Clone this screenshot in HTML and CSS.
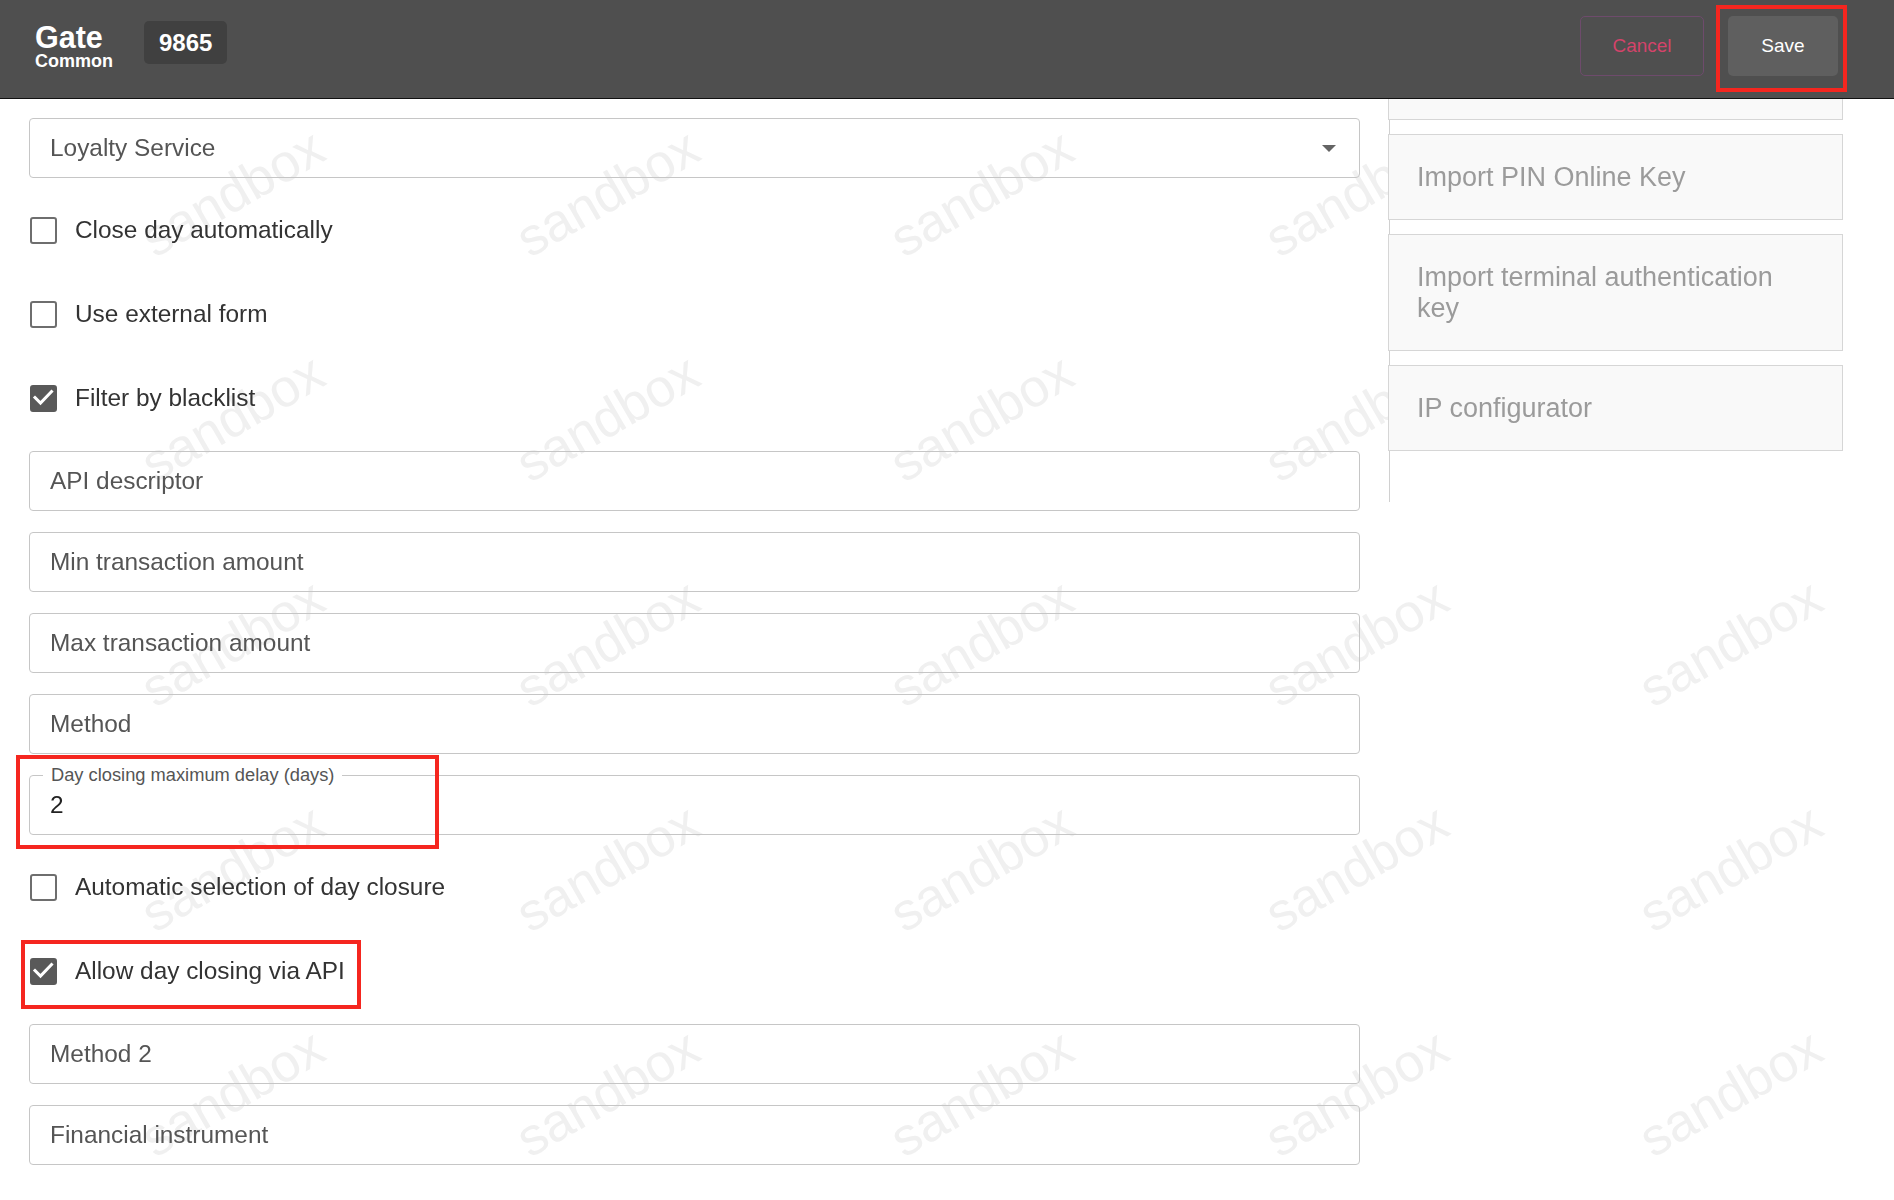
FILE: index.html
```html
<!DOCTYPE html>
<html lang="en">
<head>
<meta charset="utf-8">
<title>Gate Common 9865</title>
<link rel="stylesheet" href="styles.css">
</head>
<body>
<header class="topbar">
  <div class="brand">
    <div class="brand-title">Gate</div>
    <div class="brand-sub">Common</div>
  </div>
  <div class="badge">9865</div>
  <div class="actions">
    <button class="btn btn-cancel">Cancel</button>
    <button class="btn btn-save">Save</button>
  </div>
</header>

<div class="watermark">
  <span class="wm"><i>sandbox</i></span><span class="wm"><i>sandbox</i></span><span class="wm"><i>sandbox</i></span><span class="wm"><i>sandbox</i></span><span class="wm"><i>sandbox</i></span>
  <span class="wm"><i>sandbox</i></span><span class="wm"><i>sandbox</i></span><span class="wm"><i>sandbox</i></span><span class="wm"><i>sandbox</i></span><span class="wm"><i>sandbox</i></span>
  <span class="wm"><i>sandbox</i></span><span class="wm"><i>sandbox</i></span><span class="wm"><i>sandbox</i></span><span class="wm"><i>sandbox</i></span><span class="wm"><i>sandbox</i></span>
  <span class="wm"><i>sandbox</i></span><span class="wm"><i>sandbox</i></span><span class="wm"><i>sandbox</i></span><span class="wm"><i>sandbox</i></span><span class="wm"><i>sandbox</i></span>
  <span class="wm"><i>sandbox</i></span><span class="wm"><i>sandbox</i></span><span class="wm"><i>sandbox</i></span><span class="wm"><i>sandbox</i></span><span class="wm"><i>sandbox</i></span>
</div>

<main class="content">
  <section class="form">
    <div class="field field-select"><span>Loyalty Service</span><span class="caret"></span></div>

    <div class="check"><span class="box"></span><span class="check-label">Close day automatically</span></div>
    <div class="check"><span class="box"></span><span class="check-label">Use external form</span></div>
    <div class="check"><span class="box box-on"><svg viewBox="0 0 27 27" width="27" height="27"><polyline points="5,13.5 10.5,19 21.5,7.5" fill="none" stroke="#fff" stroke-width="3" stroke-linecap="square"/></svg></span><span class="check-label">Filter by blacklist</span></div>

    <div class="field"><span>API descriptor</span></div>
    <div class="field"><span>Min transaction amount</span></div>
    <div class="field"><span>Max transaction amount</span></div>
    <div class="field"><span>Method</span></div>
    <div class="field field-filled">
      <span class="float-label">Day closing maximum delay (days)</span>
      <span class="value">2</span>
    </div>

    <div class="check"><span class="box"></span><span class="check-label">Automatic selection of day closure</span></div>
    <div class="check"><span class="box box-on"><svg viewBox="0 0 27 27" width="27" height="27"><polyline points="5,13.5 10.5,19 21.5,7.5" fill="none" stroke="#fff" stroke-width="3" stroke-linecap="square"/></svg></span><span class="check-label">Allow day closing via API</span></div>

    <div class="field"><span>Method 2</span></div>
    <div class="field"><span>Financial instrument</span></div>
  </section>

  <aside class="side">
    <div class="tile tile-cut"></div>
    <div class="tile">Import PIN Online Key</div>
    <div class="tile">Import terminal authentication key</div>
    <div class="tile">IP configurator</div>
  </aside>
</main>

<div class="mark mark-save"></div>
<div class="mark mark-delay"></div>
<div class="mark mark-api"></div>
</body>
</html>
```

FILE: styles.css
```css
* { box-sizing: border-box; }

html, body {
  margin: 0;
  padding: 0;
  width: 1894px;
  height: 1200px;
  overflow: hidden;
  background: #ffffff;
  font-family: "Liberation Sans", Arial, sans-serif;
}

/* ---------- top bar ---------- */
.topbar {
  position: relative;
  z-index: 3;
  height: 99px;
  background: #4f4f4f;
  border-bottom: 1px solid #111111;
  display: flex;
  align-items: flex-start;
  padding: 0 56px 0 35px;
}

.brand {
  margin-top: 22px;
  color: #ffffff;
  font-weight: bold;
}
.brand-title {
  font-size: 30.5px;
  line-height: 30px;
}
.brand-sub {
  font-size: 18px;
  line-height: 19px;
}

.badge {
  margin-top: 21px;
  margin-left: 31px;
  height: 43px;
  padding: 0 15px;
  background: #404040;
  border-radius: 5px;
  color: #ffffff;
  font-weight: bold;
  font-size: 24px;
  line-height: 43px;
}

.actions {
  margin-left: auto;
  margin-top: 16px;
  display: flex;
  gap: 24px;
}

.btn {
  height: 60px;
  border-radius: 5px;
  font-family: "Liberation Sans", Arial, sans-serif;
  font-size: 19px;
  cursor: pointer;
}
.btn-cancel {
  width: 124px;
  background: transparent;
  border: 1px solid #6e4b6c;
  color: #d4436a;
}
.btn-save {
  width: 110px;
  background: #5f5f5f;
  border: none;
  color: #ffffff;
}

/* ---------- watermark ---------- */
.watermark {
  position: fixed;
  top: 80px;
  left: 45px;
  z-index: 0;
  display: grid;
  grid-template-columns: repeat(5, 374.5px);
  grid-auto-rows: 225px;
  pointer-events: none;
}
.wm {
  display: flex;
  align-items: center;
  justify-content: center;
}
.wm i {
  font-style: normal;
  font-size: 53px;
  color: #f0f0f0;
  transform: rotate(-30deg);
  white-space: nowrap;
}

/* ---------- content ---------- */
.content {
  position: relative;
  z-index: 1;
  display: flex;
  align-items: flex-start;
  gap: 29px;
  padding-left: 29px;
}

.form {
  width: 1331px;
  padding-top: 19px;
  display: flex;
  flex-direction: column;
}

.field {
  position: relative;
  height: 60px;
  margin-bottom: 21px;
  border: 1px solid #c6c6c6;
  border-radius: 4px;
  padding: 0 20px;
  display: flex;
  align-items: center;
  font-size: 24.4px;
  color: #555555;
}

.field-select {
  justify-content: space-between;
  padding-right: 23px;
}
.caret {
  width: 0;
  height: 0;
  border-left: 7px solid transparent;
  border-right: 7px solid transparent;
  border-top: 7px solid #646464;
}

.float-label {
  position: absolute;
  top: -12px;
  left: 13px;
  padding: 0 8px;
  background: #ffffff;
  font-size: 18.3px;
  line-height: 22px;
  color: #555555;
}
.value {
  color: #222222;
}

.check {
  height: 62px;
  margin-bottom: 22px;
  display: flex;
  align-items: center;
  padding-left: 1px;
  font-size: 24.4px;
  color: #333333;
}
.box {
  width: 27px;
  height: 27px;
  border: 2.5px solid #6e6e6e;
  border-radius: 3px;
  margin-right: 18px;
  flex: none;
  position: relative;
}
.box-on {
  background: #595959;
  border-color: #595959;
}
.box-on svg {
  position: absolute;
  left: -2.5px;
  top: -2.5px;
}

/* ---------- side panel ---------- */
.side {
  flex: 1;
  height: 403px;
  background: #ffffff;
  border-left: 1px solid #d0d0d0;
  display: flex;
  flex-direction: column;
  gap: 14px;
}
.tile {
  width: 455px;
  margin-left: -2px;
  background: #f9f9f9;
  border: 1px solid #d6d6d6;
  padding: 27px 60px 26px 28px;
  font-size: 27px;
  line-height: 31px;
  color: #9b9b9b;
}
.tile-cut {
  height: 21px;
  padding: 0;
  border-top: none;
}

/* ---------- annotation highlights ---------- */
.mark {
  position: absolute;
  z-index: 5;
  border: 4px solid #f5261f;
  pointer-events: none;
}
.mark-save  { left: 1716px; top: 5px;   width: 131px; height: 87px; }
.mark-delay { left: 16px;   top: 755px; width: 423px; height: 94px; }
.mark-api   { left: 21px;   top: 940px; width: 340px; height: 69px; }
```
